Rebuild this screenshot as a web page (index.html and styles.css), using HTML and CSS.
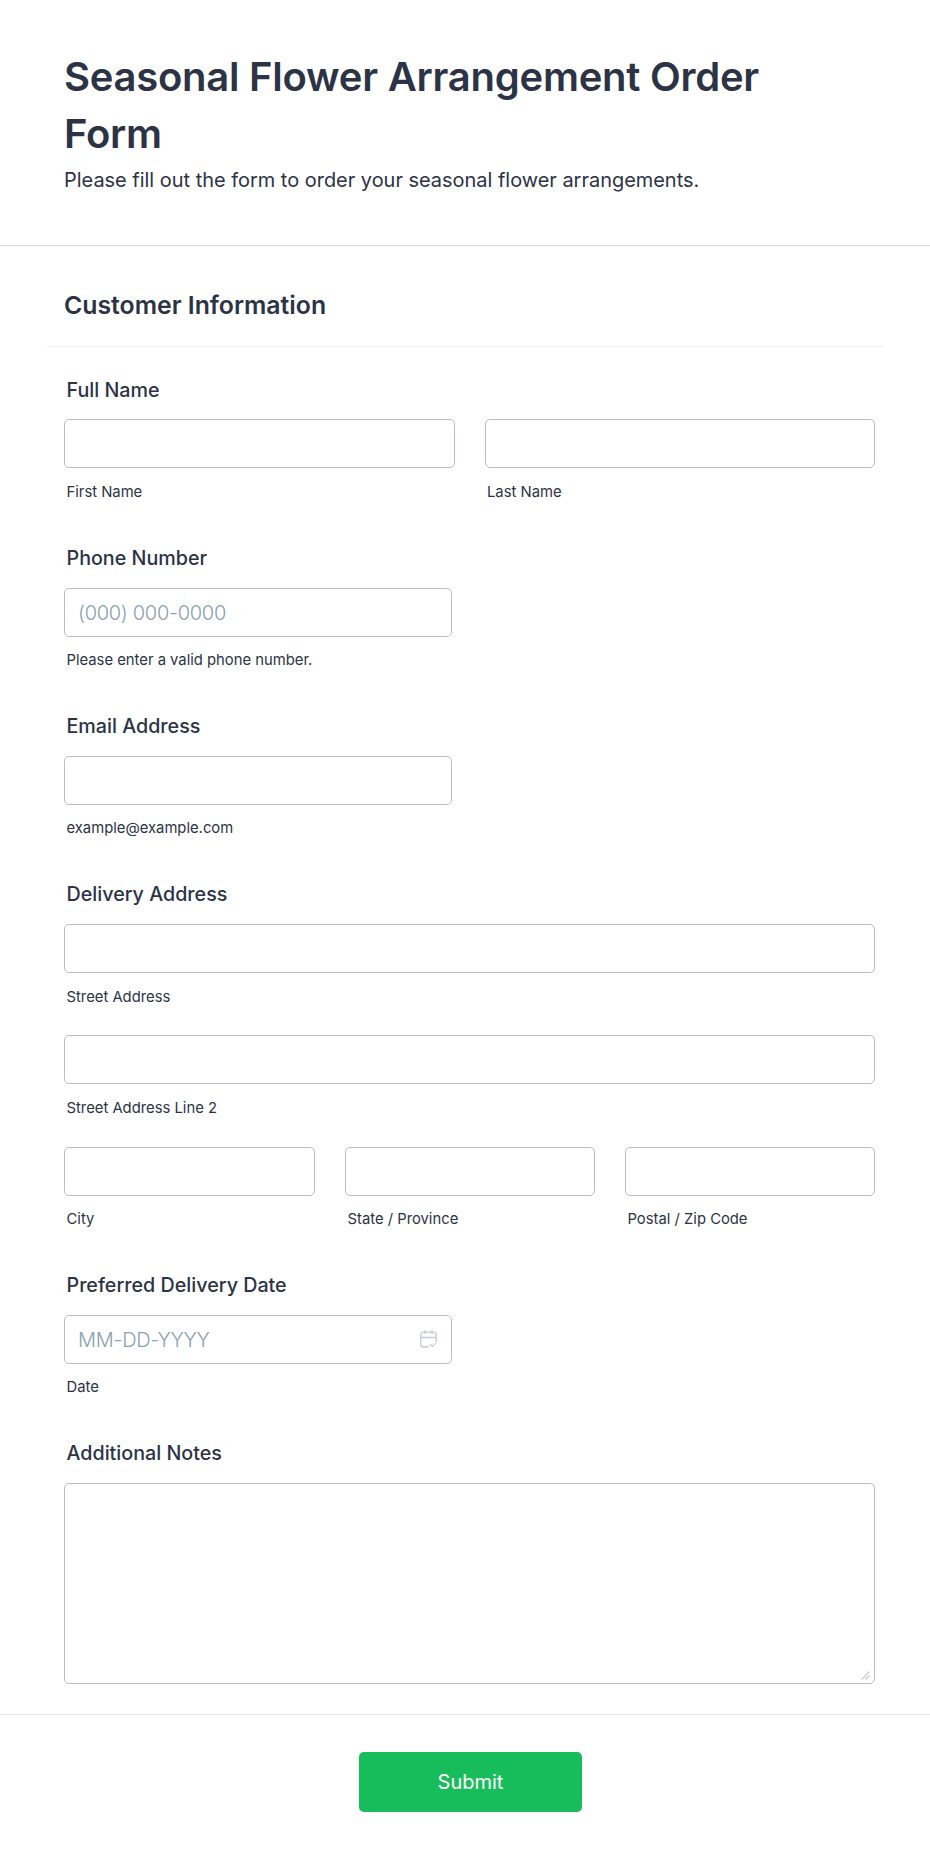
FILE: index.html
```html
<!DOCTYPE html>
<html lang="en">
<head>
<meta charset="utf-8">
<title>Seasonal Flower Arrangement Order Form</title>
<link rel="stylesheet" href="styles.css">
</head>
<body>
<form class="form">
  <header class="form-header">
    <h1 class="form-title">Seasonal Flower Arrangement Order Form</h1>
    <p class="form-subtitle">Please fill out the form to order your seasonal flower arrangements.</p>
  </header>
  <div class="form-body">
    <div class="section-head"><h2 class="section-title">Customer Information</h2></div>
    <div class="field">
      <label class="field-label">Full Name</label>
      <div class="row row-2">
        <div class="sub"><input class="input" type="text"><span class="sublabel">First Name</span></div>
        <div class="sub"><input class="input" type="text"><span class="sublabel">Last Name</span></div>
      </div>
    </div>
    <div class="field">
      <label class="field-label">Phone Number</label>
      <div class="sub half"><input class="input" type="text" placeholder="(000) 000-0000"><span class="sublabel">Please enter a valid phone number.</span></div>
    </div>
    <div class="field">
      <label class="field-label">Email Address</label>
      <div class="sub half"><input class="input" type="text"><span class="sublabel">example@example.com</span></div>
    </div>
    <div class="field">
      <label class="field-label">Delivery Address</label>
      <div class="stack">
        <div class="sub"><input class="input" type="text"><span class="sublabel">Street Address</span></div>
        <div class="sub"><input class="input" type="text"><span class="sublabel">Street Address Line 2</span></div>
        <div class="row row-3">
          <div class="sub"><input class="input" type="text"><span class="sublabel">City</span></div>
          <div class="sub"><input class="input" type="text"><span class="sublabel">State / Province</span></div>
          <div class="sub"><input class="input" type="text"><span class="sublabel">Postal / Zip Code</span></div>
        </div>
      </div>
    </div>
    <div class="field">
      <label class="field-label">Preferred Delivery Date</label>
      <div class="sub half">
        <div class="date-wrap">
          <input class="input" type="text" placeholder="MM-DD-YYYY">
          <svg class="date-icon" width="17" height="18" viewBox="0 0 17 18" fill="none" stroke="#c5c9d8" stroke-width="1.3" stroke-linecap="round" stroke-linejoin="round">
            <path d="M8 17H3A2.3 2.3 0 0 1 .7 14.7V4.5A2.3 2.3 0 0 1 3 2.2h11a2.3 2.3 0 0 1 2.3 2.3v7"/>
            <path d="M.7 7.5h15.6M5 .7v3M12 .7v3"/>
            <path d="M10.5 14.8l1.8 1.8 3.2-3.2"/>
          </svg>
        </div>
        <span class="sublabel">Date</span>
      </div>
    </div>
    <div class="field field-last">
      <label class="field-label">Additional Notes</label>
      <div class="notes-wrap">
        <textarea class="textarea"></textarea>
        <svg class="resize-grip" width="9" height="9" viewBox="0 0 9 9" fill="none" stroke="#c5c8d6" stroke-width="1.2">
          <path d="M.5 8.5l8-8M4.5 8.5l4-4"/>
        </svg>
      </div>
    </div>
  </div>
  <footer class="form-footer">
    <button class="submit" type="button">Submit</button>
  </footer>
</form>
</body>
</html>
```

FILE: styles.css
```css
* { box-sizing: border-box; }
html, body { margin: 0; padding: 0; background: #fff; }
body { font-family: Inter, "Liberation Sans", sans-serif; color: #2c3345; }
.form { width: 930px; }
.form-header { padding: 48px 64px 0; border-bottom: 1px solid #d3d5e3; height: 246px; }
.form-title { margin: 0; font-size: 40px; line-height: 57px; font-weight: 600; letter-spacing: -0.25px; }
.form-subtitle { margin: 4px 0 0; font-size: 19.95px; line-height: 28px; font-weight: 400; }
.form-body { padding: 0 55px 0 64px; }
.section-head { margin: 0 -8px 0 -17px; padding: 17px 17px 0; height: 101px; border-bottom: 1px solid #eceef3; display: flex; align-items: center; }
.section-title { margin: 0; font-size: 24.8px; line-height: 32px; font-weight: 600; }
.field { padding: 28.6px 0 12.53px; }
.field-label { display: block; margin: 0 0 15.7px 2.5px; font-size: 19.7px; line-height: 28px; font-weight: 500; }
.field-last { padding-bottom: 0; }
.row { display: grid; }
.row-2 { grid-template-columns: 1fr 1fr; column-gap: 30px; }
.row-3 { grid-template-columns: 251fr 250fr 250fr; column-gap: 30px; }
.stack { display: flex; flex-direction: column; gap: 27.7px; }
.sub { display: flex; flex-direction: column; }
.half { width: 388px; }
.input { display: block; width: 100%; height: 49px; padding: 1px 13px 0; border: 1px solid #b8bdc9; border-radius: 5px; background: #fff; font: 300 20px Inter, sans-serif; letter-spacing: -0.3px; color: #2c3345; outline: 0; }
.input::placeholder { color: #8ca0b0; opacity: 1; }
.sublabel { display: block; margin: 12.5px 0 0 2.5px; font-size: 14.8px; line-height: 22px; color: #2c3345; }
.date-wrap { position: relative; }
.date-icon { position: absolute; right: 15px; top: 15px; }
.notes-wrap { position: relative; }
.textarea { display: block; width: 100%; height: 200.6px; border: 1px solid #b8bdc9; border-radius: 5px; background: #fff; outline: 0; padding: 12px; resize: none; }
.resize-grip { position: absolute; right: 5px; bottom: 4px; }
.form-footer { margin-top: 30px; border-top: 1px solid #e3e5ec; padding: 37px 0 0 11px; display: flex; justify-content: center; height: 148px; }
.submit { width: 223px; height: 60px; background: #18bd5b; border: 0; border-radius: 5px; color: #fff; font: 400 20px Inter, sans-serif; }
```
